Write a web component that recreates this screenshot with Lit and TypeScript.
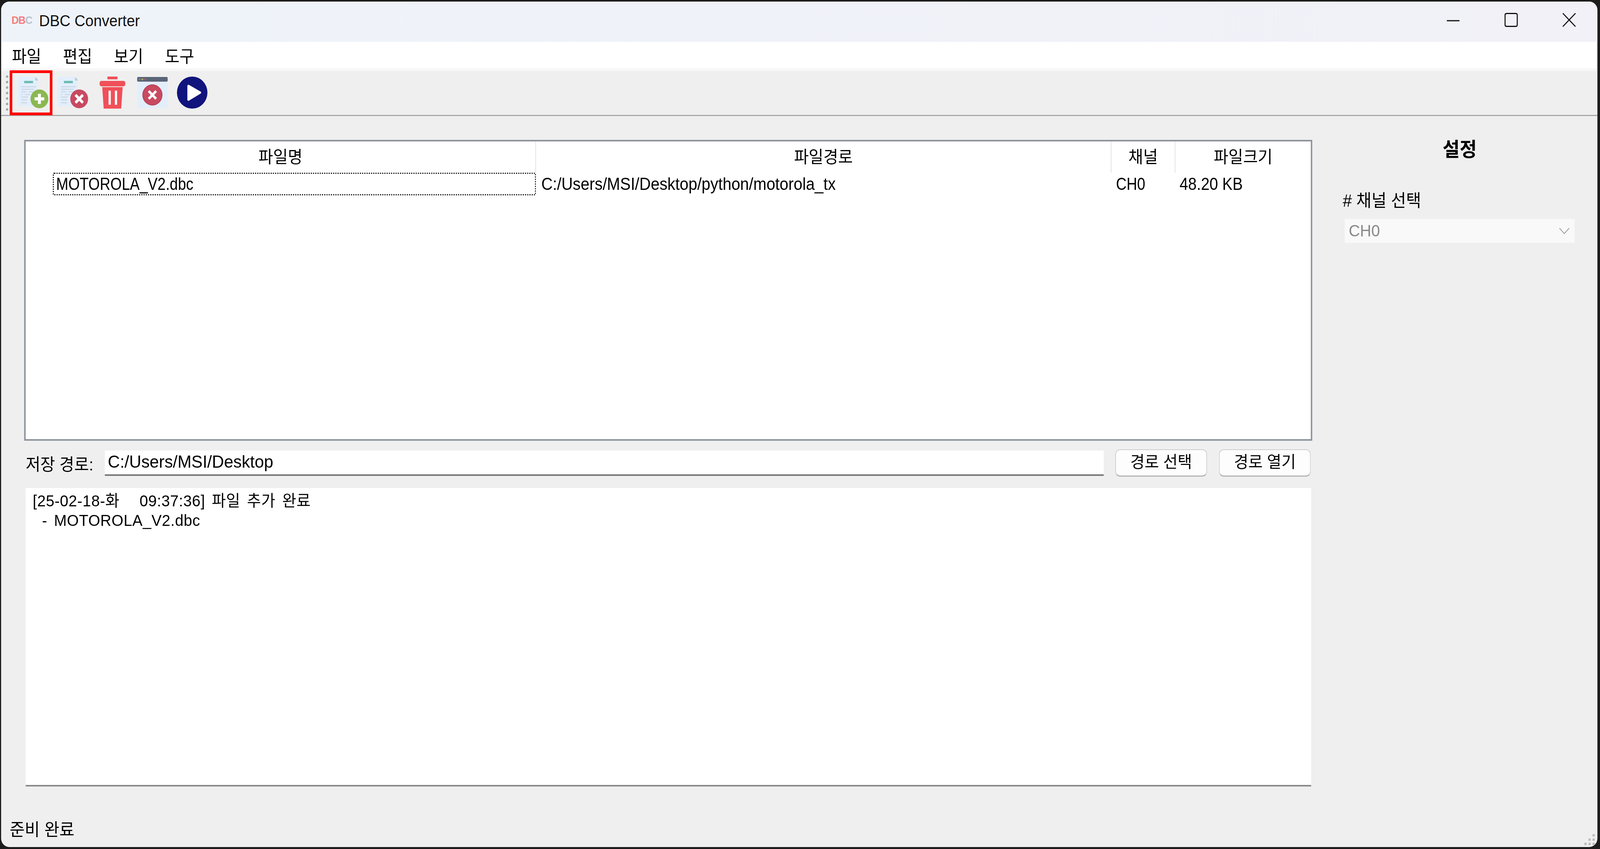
import { LitElement, html, css, svg } from "lit";
import { customElement } from "lit/decorators.js";

const DESIGN_WIDTH = 4304;

const docBody = svg`
  <rect x="7" y="7" width="55" height="75" fill="#e3eefb"/>
  <path d="M54 7 L62 16 L54 16 Z" fill="#b9c6d6"/>
  <rect x="24" y="17" width="24" height="6" fill="#6cbdb6"/>
  <g stroke="#c6d6e2" stroke-width="2.4">
    <path d="M16 32H56"/><path d="M16 38.500H50"/><path d="M16 45H30M36 45H48"/>
    <path d="M16 52H20M26 52H40"/><path d="M16 58.500H34"/><path d="M16 65.500H32"/><path d="M16 73H32"/>
  </g>`;

const icons = [
  svg`<svg class="tool" viewBox="0 0 96 96">${docBody}
    <circle cx="65" cy="63" r="24" fill="#8bb851"/>
    <path d="M65 50V76M52 63H78" stroke="#fff" stroke-width="8"/></svg>`,
  svg`<svg class="tool" viewBox="0 0 96 96">${docBody}
    <circle cx="65" cy="63" r="24" fill="#c84a60"/>
    <path d="M55 53L75 73M75 53L55 73" stroke="#fff" stroke-width="7"/></svg>`,
  svg`<svg class="tool" viewBox="0 0 96 96">
    <path d="M34 6H61V13H34Z" fill="#f05058"/>
    <rect x="13" y="17" width="69" height="14" rx="5" fill="#f05058"/>
    <path d="M20 33H75L71 88H24Z" fill="#f05058"/>
    <path d="M40 42V78M57 42V78" stroke="#fff" stroke-width="6"/></svg>`,
  svg`<svg class="tool" viewBox="0 0 96 96">
    <rect x="7" y="7" width="82" height="80" rx="2" fill="#e3eefb"/>
    <rect x="7" y="7" width="82" height="12" rx="3" fill="#5a6478"/>
    <circle cx="14" cy="13" r="2.500" fill="#5e9a80"/>
    <circle cx="21" cy="13" r="2.500" fill="#b5a85c"/>
    <circle cx="28" cy="13" r="2.500" fill="#a85a6c"/>
    <circle cx="48" cy="53" r="26" fill="#c84a60" stroke="#b53f55" stroke-width="2"/>
    <path d="M38 43L58 63M58 43L38 63" stroke="#fff" stroke-width="6.500"/></svg>`,
  svg`<svg class="tool" viewBox="0 0 96 96">
    <circle cx="48" cy="47" r="41" fill="#10147c"/>
    <path d="M38 30L69 47L38 65Z" fill="#fff" stroke="#fff" stroke-width="6" stroke-linejoin="round"/></svg>`,
];

@customElement("app-root")
export class AppRoot extends LitElement {
  static styles = css`
    :host {
      display: block;
      width: 100vw;
      height: 2173px;
      background: #1c1c1c;
      overflow: hidden;
      font-family: "Liberation Sans", "Noto Sans CJK KR", sans-serif;
      color: #000;
    }
    .stage {
      width: 4304px;
      height: 2173px;
      transform-origin: 0 0;
      overflow: hidden;
    }
    .window {
      box-sizing: border-box;
      width: 4294px;
      height: 2164px;
      margin: 4px 7px 5px 3px;
      border-radius: 22px;
      overflow: hidden;
      background: #efefef;
      display: flex;
      flex-direction: column;
      position: relative;
    }
    .titlebar {
      height: 103px;
      flex: none;
      display: flex;
      align-items: flex-start;
      background: linear-gradient(90deg, #eef3fa, #f1f1f7);
    }
    .logo {
      margin: 33px 0 0 28px;
      width: 74px;
      font: bold 27px/30px "Liberation Sans", sans-serif;
      color: #f47c7c;
      letter-spacing: -1px;
    }
    .logo span { color: #b8c4d0; }
    .title {
      margin-top: 25px;
      font-size: 40px;
      line-height: 48px;
      color: #111;
      white-space: nowrap;
    }
    .controls {
      margin-left: auto;
      padding: 29px 58px 0 0;
      display: flex;
      gap: 120px;
    }
    .controls svg { width: 36px; height: 36px; display: block; }
    .menu {
      height: 68px;
      flex: none;
      background: #fff;
      display: flex;
      padding-left: 29px;
      gap: 58px;
      box-sizing: border-box;
      align-items: center;
      font-size: 43px;
    }
    .strip { height: 7px; flex: none; background: #f7f7f7; }
    .toolbar {
      height: 115px;
      flex: none;
      box-sizing: border-box;
      border-bottom: 3px solid #a9a9a9;
      display: flex;
      gap: 11px;
      padding: 8px 0 0 38px;
      position: relative;
    }
    .tool { width: 96px; height: 96px; display: block; flex: none; }
    .grip {
      position: absolute;
      left: 13px;
      top: 11px;
      display: flex;
      flex-direction: column;
      gap: 8px;
    }
    .grip i {
      display: block;
      width: 6px;
      height: 6px;
      background: #a8a8a8;
      border-radius: 3px 1px 1px 1px;
    }
    .mark {
      position: absolute;
      left: 23px;
      top: -2px;
      width: 115px;
      height: 115px;
      box-sizing: border-box;
      border: 7px solid #ff0000;
    }
    .content {
      flex: 1;
      display: flex;
      padding: 61px 0 0 62px;
      min-height: 0;
    }
    .left { width: 3465px; flex: none; display: flex; flex-direction: column; }
    .table {
      height: 770px;
      flex: none;
      box-sizing: border-box;
      background: #fff;
      border: 4px solid #8d939c;
    }
    .head, .row {
      display: grid;
      grid-template-columns: 1373px 1548px 172px 1fr;
    }
    .head { height: 80px; }
    .head div {
      text-align: center;
      font-size: 43px;
      line-height: 80px;
      border-right: 2px solid #e2e2e2;
    }
    .head div:last-child { border-right: 0; }
    .row { height: 58px; font-size: 44px; line-height: 58px; }
    .row > div { white-space: nowrap; }
    .cell-name {
      margin-left: 73px;
      box-sizing: border-box;
      border: 3px dotted #111;
      border-radius: 4px;
      padding-left: 6px;
      line-height: 52px;
    }
    .cell-path { padding-left: 14px; }
    .cell-ch { padding-left: 12px; }
    .cell-size { padding-left: 11px; }
    .narrow { display: inline-block; transform: scaleX(0.895); transform-origin: 0 50%; }
    .path-text { transform: scaleX(0.964); }
    .size-text { transform: scaleX(0.94); }
    .pathrow {
      height: 70px;
      flex: none;
      margin-top: 22px;
      display: flex;
      align-items: center;
    }
    .pathlabel {
      width: 217px;
      padding-left: 4px;
      box-sizing: border-box;
      font-size: 43px;
      flex: none;
      white-space: nowrap;
    }
    .input {
      width: 2687px;
      flex: none;
      height: 65px;
      margin-right: 31px;
      box-sizing: border-box;
      background: #fff;
      border-bottom: 4px solid #777;
      padding-left: 8px;
      font-size: 45px;
      line-height: 58px;
      white-space: nowrap;
    }
    .btn {
      width: 247px;
      height: 70px;
      flex: none;
      box-sizing: border-box;
      background: #fdfdfd;
      border: 2px solid #cfcfcf;
      border-bottom: 3px solid #b4b4b4;
      border-radius: 13px;
      text-align: center;
      font-size: 42px;
      line-height: 62px;
      margin-right: 32px;
      white-space: nowrap;
    }
    .log {
      height: 764px;
      flex: none;
      margin: 29px 3px 0 4px;
      box-sizing: border-box;
      background: #fff;
      border-bottom: 4px solid #8a8a8a;
      padding: 8px 0 0 19px;
      font-size: 41px;
      line-height: 50px;
      letter-spacing: 0.6px;
      word-spacing: 6px;
      white-space: pre;
    }
    .log-sub { padding-left: 25px; }
    .right { margin-left: 82px; width: 624px; flex: none; }
    .setting {
      text-align: center;
      font-size: 50px;
      font-weight: bold;
      line-height: 50px;
      margin-left: 5px;
      white-space: nowrap;
    }
    .chlabel { margin-top: 81px; font-size: 44px; line-height: 50px; white-space: nowrap; }
    .combo {
      margin: 21px 0 0 5px;
      width: 619px;
      height: 62px;
      box-sizing: border-box;
      background: #f9f9f9;
      border: 1px solid #f4f4f4;
      display: flex;
      align-items: center;
      padding-left: 10px;
      font-size: 42px;
      color: #8a8a8a;
    }
    .combo svg { margin-left: auto; margin-right: 13px; width: 28px; height: 16px; }
    .status {
      position: absolute;
      left: 23px;
      bottom: 19px;
      font-size: 44px;
      line-height: 50px;
      white-space: nowrap;
    }
    .sizegrip {
      position: absolute;
      right: 7px;
      bottom: 5px;
      display: grid;
      grid-template-columns: repeat(3, 6px);
      grid-auto-rows: 6px;
      gap: 5px;
    }
    .sizegrip i { background: #bcbcbc; }
    .sizegrip .no { background: none; }
  `;

  render() {
    const fit = window.innerWidth / DESIGN_WIDTH;
    return html`
      <div class="stage" style="transform: scaleX(${fit})">
      <div class="window">
        <div class="titlebar">
          <div class="logo">DB<span>C</span></div>
          <div class="title">DBC Converter</div>
          <div class="controls">
            <svg viewBox="0 0 36 36"><path d="M1 20H35" stroke="#111" stroke-width="3"/></svg>
            <svg viewBox="0 0 36 36"><rect x="1.500" y="1.500" width="33" height="33" rx="4" fill="none" stroke="#111" stroke-width="3"/></svg>
            <svg viewBox="0 0 36 36"><path d="M1 1L35 35M35 1L1 35" stroke="#111" stroke-width="2.600"/></svg>
          </div>
        </div>
        <div class="menu"><span>파일</span><span>편집</span><span>보기</span><span>도구</span></div>
        <div class="strip"></div>
        <div class="toolbar">
          <div class="grip">${[0, 1, 2, 3, 4, 5, 6].map(() => html`<i></i>`)}</div>
          ${icons}
          <div class="mark"></div>
        </div>
        <div class="content">
          <div class="left">
            <div class="table">
              <div class="head"><div>파일명</div><div>파일경로</div><div>채널</div><div>파일크기</div></div>
              <div class="row">
                <div class="cell-name"><span class="narrow">MOTOROLA_V2.dbc</span></div>
                <div class="cell-path"><span class="narrow path-text">C:/Users/MSI/Desktop/python/motorola_tx</span></div>
                <div class="cell-ch"><span class="narrow">CH0</span></div>
                <div class="cell-size"><span class="narrow size-text">48.20 KB</span></div>
              </div>
            </div>
            <div class="pathrow">
              <div class="pathlabel">저장 경로:</div>
              <div class="input">C:/Users/MSI/Desktop</div>
              <div class="btn">경로 선택</div>
              <div class="btn">경로 열기</div>
            </div>
            <div class="log"><div>[25-02-18-화   09:37:36] 파일 추가 완료</div><div class="log-sub">- MOTOROLA_V2.dbc</div></div>
          </div>
          <div class="right">
            <div class="setting">설정</div>
            <div class="chlabel"># 채널 선택</div>
            <div class="combo"><span>CH0</span>
              <svg viewBox="0 0 28 16"><path d="M1 1L14 15L27 1" fill="none" stroke="#9a9a9a" stroke-width="2"/></svg>
            </div>
          </div>
        </div>
        <div class="status">준비 완료</div>
        <div class="sizegrip">
          <i class="no"></i><i class="no"></i><i></i>
          <i class="no"></i><i></i><i></i>
          <i></i><i></i><i></i>
        </div>
      </div>
      </div>
    `;
  }
}
